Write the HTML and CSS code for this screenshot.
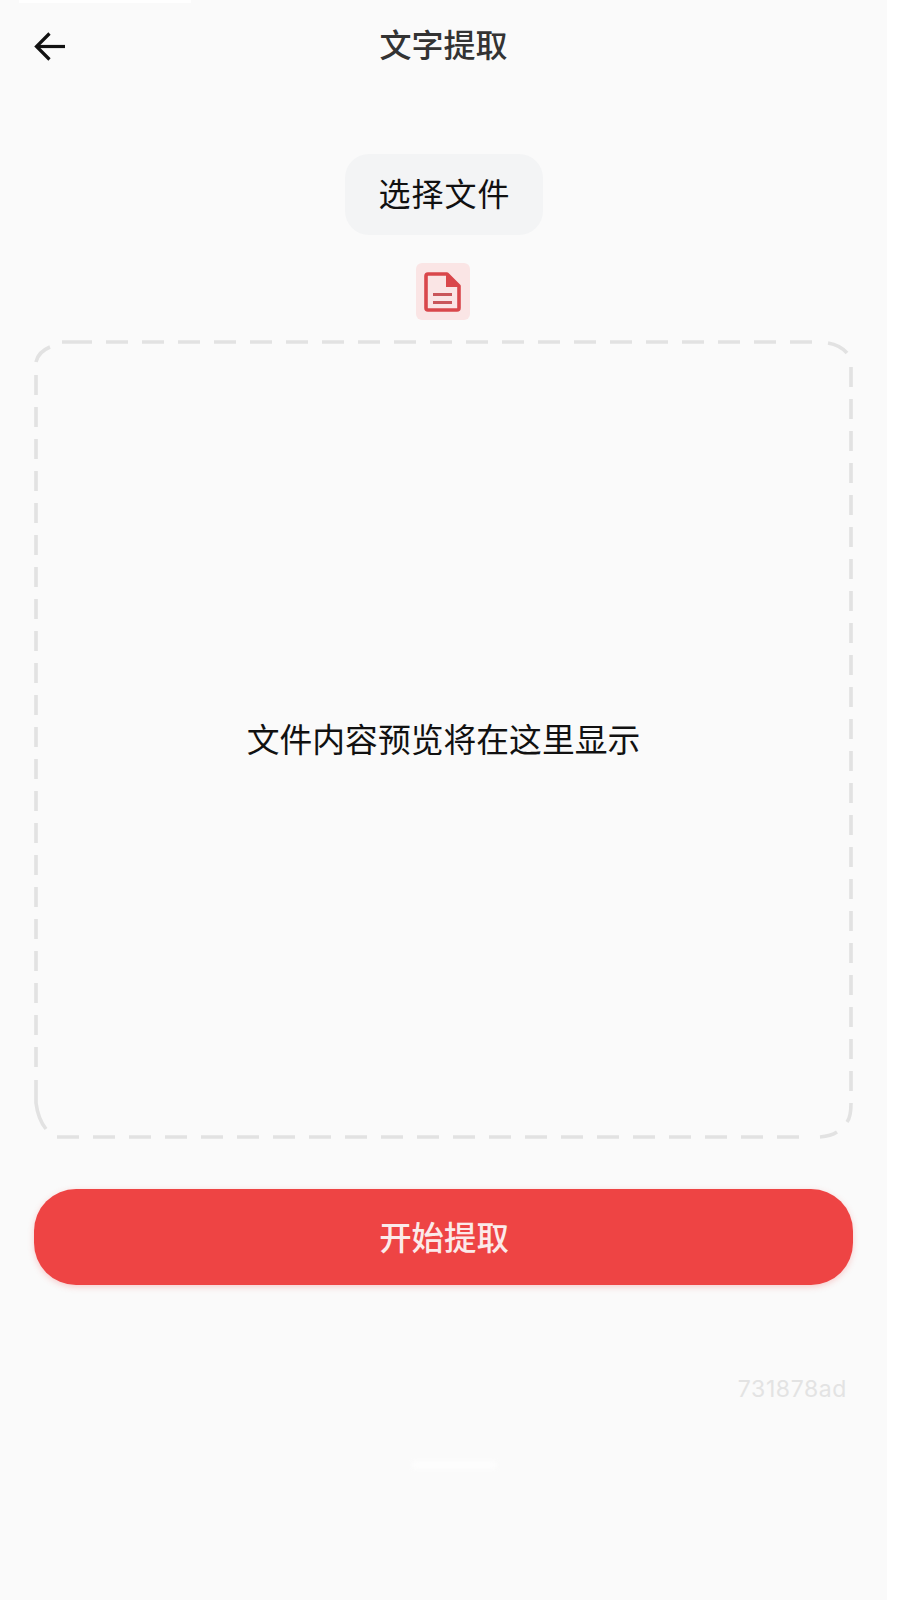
FILE: index.html
```html
<!DOCTYPE html>
<html lang="zh-CN">
<head>
    <meta charset="UTF-8">
    <meta name="viewport" content="width=device-width, initial-scale=1.0">
    <title>文字提取</title>
    <link rel="stylesheet" href="styles.css">
</head>
<body>
    <div class="page">
        <div class="status-strip"></div>

        <div class="header">
            <svg class="back-icon" width="32" height="30" viewBox="0 0 32 30" fill="none" stroke="#111" stroke-width="3.2">
                <path d="M31 14.5H3"/>
                <path d="M15.5 1.5L2.5 14.5L15.5 27.5"/>
            </svg>
            <h1>文字提取</h1>
        </div>

        <div class="actions">
            <button class="choose-btn">选择文件</button>
            <div class="file-badge">
                <svg width="37" height="40" viewBox="0 0 37 40" fill="none">
                    <path d="M4 2H23L35 14V36A2 2 0 0 1 33 38H4A2 2 0 0 1 2 36V4A2 2 0 0 1 4 2Z" stroke="#d9474b" stroke-width="3.6" stroke-linejoin="round"/>
                    <path d="M22 1L36 15H22Z" fill="#d9474b"/>
                    <path d="M9 22.5H28M9 30.5H28" stroke="#c9565a" stroke-width="3"/>
                </svg>
            </div>
        </div>

        <div class="preview">
            <svg class="preview-border" width="819" height="799" viewBox="0 0 819 799" fill="none">
                <path class="dash-h" d="M72 2H784M23 797H765"/>
                <path class="dash-v" d="M817 27V751M2 35V727"/>
                <path class="dash-solid" d="M28 2H58M2 22Q4 12 16 7M794 3Q806 5 813 13M817 763Q817 777 813 782M803 792Q797 796 786 797M2 740V763Q4 779 12 789"/>
            </svg>
            <p>文件内容预览将在这里显示</p>
        </div>

        <button class="start-btn">开始提取</button>

        <div class="build-id">731878ad</div>
        <div class="toast-ghost"></div>
    </div>
</body>
</html>
```

FILE: styles.css
```css
body {
    margin: 0;
    background-color: #fff;
    font-family: "Noto Sans CJK SC", "Liberation Sans", sans-serif;
    color: #111;
}
.page {
    width: 887px;
    height: 1600px;
    box-sizing: border-box;
    padding: 0 34px;
    background-color: #fafafa;
    overflow: hidden;
}
.status-strip {
    width: 172px;
    height: 3px;
    margin-left: -15px;
    background-color: #fff;
}
.header {
    position: relative;
    display: flex;
    align-items: center;
    justify-content: center;
    height: 86px;
}
.header h1 {
    margin: 0 0 6px;
    font-size: 32px;
    font-weight: 500;
    color: #333;
}
.back-icon {
    position: absolute;
    left: 0;
    top: 29px;
}
.actions {
    display: flex;
    flex-direction: column;
    align-items: center;
    gap: 28px;
    margin-top: 65px;
}
.choose-btn {
    width: 198px;
    height: 81px;
    margin-left: 1px;
    padding: 0 0 6px 1px;
    border: none;
    border-radius: 24px;
    background-color: #f3f4f5;
    font-family: inherit;
    font-size: 32px;
    letter-spacing: 1px;
    color: #111;
}
.file-badge {
    display: flex;
    align-items: center;
    justify-content: center;
    width: 54px;
    height: 57px;
    margin-right: 2px;
    border-radius: 6px;
    background-color: #fae5e5;
}
.preview {
    position: relative;
    display: flex;
    align-items: center;
    justify-content: center;
    width: 819px;
    height: 799px;
    margin-top: 20px;
}
.preview p {
    margin: 0 0 5px;
    font-size: 32.8px;
    color: #111;
}
.preview-border {
    position: absolute;
    left: 0;
    top: 0;
    filter: blur(0.6px);
}
.dash-h, .dash-v, .dash-solid {
    stroke: #e2e2e2;
    stroke-width: 3.6;
}
.dash-h {
    stroke-dasharray: 22 14;
}
.dash-v {
    stroke-dasharray: 20 12;
}
.start-btn {
    display: block;
    width: 819px;
    height: 96px;
    margin-top: 50px;
    padding: 0 0 4px 1px;
    border: none;
    border-radius: 42px;
    background-color: #ee4444;
    box-shadow: 0 2px 6px rgba(239, 68, 68, 0.25);
    font-family: inherit;
    font-size: 32.4px;
    font-weight: 500;
    color: #fbeaea;
}
.build-id {
    margin-top: 90px;
    padding-right: 6px;
    font-family: Inter, "Liberation Sans", sans-serif;
    font-size: 23px;
    letter-spacing: 0.6px;
    line-height: 28px;
    text-align: right;
    color: #e3e3e3;
}
.toast-ghost {
    width: 85px;
    height: 8px;
    margin: 58px 0 0 378px;
    border-radius: 4px;
    background-color: #fff;
    opacity: 0.7;
    filter: blur(2px);
}
```
